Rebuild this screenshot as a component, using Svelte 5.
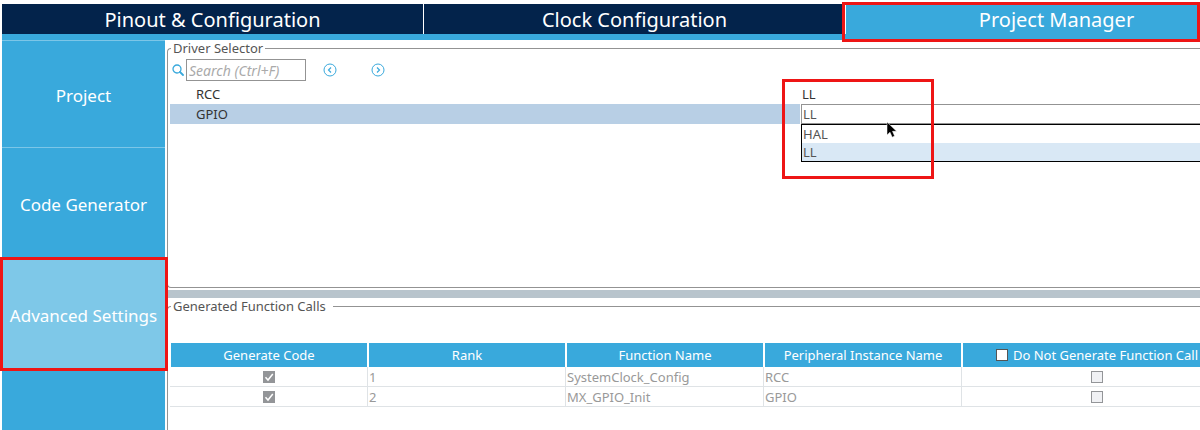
<script>
    let driver = $state("LL")
    let tab = $state("Project Manager")
    let section = $state("Advanced Settings")
    let search = $state("")

    const tabs = ["Pinout & Configuration", "Clock Configuration", "Project Manager"]
    const sections = ["Project", "Code Generator", "Advanced Settings"]
    const options = ["HAL", "LL"]

    let calls = $state([
        { generate: true, rank: 1, name: "SystemClock_Config", instance: "RCC", skip: false },
        { generate: true, rank: 2, name: "MX_GPIO_Init", instance: "GPIO", skip: false }
    ])
</script>

<div class="app">
    <nav class="tabs">
        {#each tabs as name}
            <button class="tab" class:active={tab === name} onclick={() => tab = name}>{name}</button>
        {/each}
        <span class="mark tab-mark"></span>
    </nav>

    <div class="body">
        <nav class="sidebar">
            {#each sections as name}
                <button class="section" class:active={section === name} onclick={() => section = name}>
                    {name}
                    {#if section === name}
                        <span class="mark section-mark"></span>
                    {/if}
                </button>
            {/each}
        </nav>

        <main>
            <fieldset class="drivers">
                <legend>Driver Selector</legend>
                <div class="search">
                    <label for="search" aria-label="Search">
                        <svg width="12" height="12" viewBox="0 0 12 12" fill="none" stroke="#39a9dc">
                            <circle cx="5" cy="5" r="4" stroke-width="1.3" />
                            <path d="M8 8l3 3" stroke-width="1.8" stroke-linecap="round" />
                        </svg>
                    </label>
                    <input id="search" type="text" placeholder="Search (Ctrl+F)" bind:value={search} />
                    <button class="step" aria-label="Previous match">
                        <svg width="14" height="14" viewBox="0 0 14 14" fill="none" stroke="#39a9dc">
                            <circle cx="7" cy="7" r="6" />
                            <path d="M8 4.5L5.5 7L8 9.5" stroke-width="1.2" />
                        </svg>
                    </button>
                    <button class="step" aria-label="Next match">
                        <svg width="14" height="14" viewBox="0 0 14 14" fill="none" stroke="#39a9dc">
                            <circle cx="7" cy="7" r="6" />
                            <path d="M6 4.5L8.5 7L6 9.5" stroke-width="1.2" />
                        </svg>
                    </button>
                </div>

                <table class="driver-table">
                    <tbody>
                        <tr>
                            <td>RCC</td>
                            <td class="value">LL</td>
                        </tr>
                        <tr class="selected">
                            <td>GPIO</td>
                            <td class="editor">
                                <select bind:value={driver} aria-label="GPIO driver">
                                    {#each options as option}
                                        <option>{option}</option>
                                    {/each}
                                </select>
                                <ul class="popup">
                                    {#each options as option}
                                        <li class:current={driver === option}>{option}</li>
                                    {/each}
                                </ul>
                                <span class="mark driver-mark"></span>
                                <svg class="cursor" width="12" height="18" viewBox="0 0 12 18">
                                    <path d="M1 1V14L4 11.2L6.2 16.2L8.6 15.1L6.5 10.3H10.6Z" fill="#000" stroke="#fff" stroke-width="0.5" />
                                </svg>
                            </td>
                        </tr>
                    </tbody>
                </table>
            </fieldset>

            <div class="splitter"></div>

            <fieldset class="functions">
                <legend class="wide">Generated Function Calls</legend>
                <table class="call-table">
                    <thead>
                        <tr>
                            <th>Generate Code</th>
                            <th>Rank</th>
                            <th>Function Name</th>
                            <th>Peripheral Instance Name</th>
                            <th class="last">
                                <label><input type="checkbox" />Do Not Generate Function Call</label>
                            </th>
                        </tr>
                    </thead>
                    <tbody>
                        {#each calls as call}
                            <tr>
                                <td class="tick"><input type="checkbox" bind:checked={call.generate} disabled aria-label="Generate code" /></td>
                                <td>{call.rank}</td>
                                <td>{call.name}</td>
                                <td>{call.instance}</td>
                                <td class="tick"><input type="checkbox" bind:checked={call.skip} disabled aria-label="Do not generate function call" /></td>
                            </tr>
                        {/each}
                    </tbody>
                </table>
            </fieldset>
        </main>
    </div>
</div>

<style>
    :global(body) {
        background: #fff;
    }
    .app {
        --blue: #39a9dc;
        --navy: #03234b;
        --line: #939393;
        display: flex;
        flex-direction: column;
        box-sizing: border-box;
        min-height: 100vh;
        padding: 4px 0 0 2px;
        overflow: hidden;
        font-family: "Noto Sans", "Open Sans", sans-serif;
        font-size: 13px;
        line-height: 18px;
        color: #333;
    }
    button, input, select {
        box-sizing: border-box;
        margin: 0;
        padding: 0;
        border: 0;
        border-radius: 0;
        background: none;
        font: inherit;
        color: inherit;
    }

    /* the annotation frames */
    .mark {
        position: absolute;
        box-sizing: border-box;
        border: 3px solid #ee1515;
        pointer-events: none;
    }

    .tabs {
        position: relative;
        display: grid;
        grid-template-columns: repeat(3, 1fr);
        gap: 1px;
        width: calc(100% + 67px);
        border-bottom: 6px solid var(--blue);
    }
    .tab {
        height: 30px;
        padding-top: 2px;
        background: var(--navy);
        font-size: 20px;
        color: #fff;
    }
    .tab.active {
        background: var(--blue);
    }
    .tab-mark {
        top: -2px;
        right: 67px;
        bottom: -8px;
        width: 358px;
    }

    .body {
        display: flex;
        flex: 1;
    }
    .sidebar {
        flex: none;
        width: 163px;
        background: var(--blue);
    }
    .section {
        position: relative;
        display: block;
        width: 100%;
        height: 111px;
        padding-top: 4px;
        border-top: 1px solid #7cc6e8;
        font-size: 17px;
        white-space: nowrap;
        color: #fff;
    }
    .section:first-child {
        height: 107px;
    }
    .section.active {
        background: #7ec8e8;
    }
    .section-mark {
        inset: -2px -3px -2px -2px;
    }

    main {
        display: flex;
        flex: 1;
        flex-direction: column;
        min-width: 0;
        padding-left: 2px;
    }
    fieldset {
        min-width: 0;
        margin: 0;
        padding: 0 0 0 2px;
        border: 1px solid var(--line);
        border-right: 0;
        border-radius: 4px 0 0 4px;
    }
    legend {
        margin-left: 1px;
        padding: 0 2px;
        line-height: 16px;
        color: #555;
    }
    legend.wide {
        padding-right: 7px;
    }
    .drivers {
        height: 248px;
        box-sizing: border-box;
    }
    .search {
        display: flex;
        align-items: center;
        gap: 2px;
        padding: 3px 0 3px 2px;
    }
    .search label {
        display: flex;
    }
    .search input {
        width: 120px;
        height: 22px;
        padding: 0 2px;
        border: 1px solid var(--line);
        font-size: 14px;
    }
    .search input::placeholder {
        font-style: italic;
        color: #aaa;
        opacity: 1;
    }
    .step {
        display: flex;
        margin-left: 15px;
        margin-right: 17px;
    }

    table {
        table-layout: fixed;
        border-spacing: 0;
    }
    .driver-table {
        width: calc(100% + 230px);
    }
    .driver-table td {
        height: 20px;
        padding: 0 0 0 26px;
    }
    .driver-table .value {
        padding-left: 2px;
    }
    .selected {
        background: #b8cfe5;
    }
    .driver-table .editor {
        position: relative;
        padding: 0 0 0 1px;
        background: #fff;
    }
    .editor select {
        display: block;
        width: 100%;
        height: 20px;
        padding: 0 1px;
        border: 1px solid var(--line);
        appearance: none;
        color: #555;
    }
    .popup {
        position: absolute;
        top: 20px;
        left: 1px;
        right: 0;
        margin: 0;
        padding: 0;
        border: 1px solid #000;
        background: #fff;
        list-style: none;
        color: #555;
    }
    .popup li {
        padding: 0 1px;
    }
    .popup li.current {
        background: #d9e8f5;
    }
    .driver-mark {
        top: -25px;
        left: -18px;
        width: 152px;
        height: 100px;
    }
    .cursor {
        position: absolute;
        top: 17px;
        left: 86px;
    }

    .splitter {
        height: 8px;
        margin-top: 2px;
        background: #b8c4cc;
    }

    .functions {
        flex: 1;
        border-bottom: 0;
        border-bottom-left-radius: 0;
    }
    .call-table {
        width: calc(100% + 32px);
        margin-top: 29px;
        color: #999;
    }
    th {
        width: 198px;
        box-sizing: border-box;
        height: 24px;
        padding: 0;
        border: solid #fff;
        border-width: 0 1px;
        background: var(--blue);
        font-weight: 400;
        white-space: nowrap;
        color: #fff;
    }
    th.last {
        width: auto;
    }
    th label {
        display: flex;
        align-items: center;
        justify-content: center;
        gap: 5px;
    }
    .call-table td {
        height: 19px;
        padding: 0 0 0 1px;
        border-right: 1px solid #dfe3e6;
        border-bottom: 1px solid #dfe3e6;
    }
    .call-table input {
        display: block;
        flex: none;
        width: 12px;
        height: 12px;
        border: 1px solid #555;
        background: #fff;
        appearance: none;
    }
    .call-table .tick input {
        margin: 0 auto;
        border-color: #939598;
        background: #f0f1f4;
    }
    .call-table .tick input:checked {
        background: #939598 url("data:image/svg+xml,%3Csvg xmlns='http://www.w3.org/2000/svg' viewBox='0 0 10 10'%3E%3Cpath d='M1.5 5.2L4 8L8.8 2' fill='none' stroke='%23fff' stroke-width='1.5'/%3E%3C/svg%3E");
    }
</style>
